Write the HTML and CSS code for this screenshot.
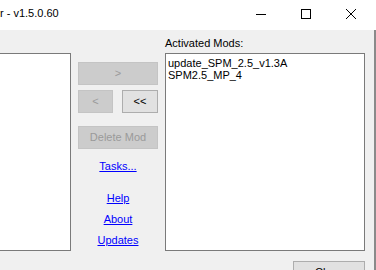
FILE: index.html
```html
<!DOCTYPE html>
<html>
<head>
<meta charset="utf-8">
<link rel="stylesheet" href="styles.css">
</head>
<body>
<div class="screen">
  <div class="window">
    <div class="titlebar">
      <span class="title">r - v1.5.0.60</span>
      <div class="controls">
        <span class="ctl"><svg width="10" height="10" viewBox="0 0 10 10"><line x1="0" y1="5.5" x2="10" y2="5.5" stroke="#000" stroke-width="1"/></svg></span>
        <span class="ctl"><svg width="10" height="10" viewBox="0 0 10 10"><rect x="0.5" y="0.5" width="9" height="9" fill="none" stroke="#000" stroke-width="1"/></svg></span>
        <span class="ctl"><svg width="10" height="10" viewBox="0 0 10 10"><path d="M0 0 L10 10 M10 0 L0 10" stroke="#000" stroke-width="1"/></svg></span>
      </div>
    </div>
    <div class="client">
      <div class="panes">
        <div class="listbox listbox-left"></div>
        <div class="mid">
          <button class="btn btn-disabled btn-wide">&gt;</button>
          <div class="btn-row">
            <button class="btn btn-disabled btn-left">&lt;</button>
            <button class="btn btn-right">&lt;&lt;</button>
          </div>
          <button class="btn btn-disabled btn-delete">Delete Mod</button>
          <a class="link link-tasks" href="#">Tasks...</a>
          <a class="link link-help" href="#">Help</a>
          <a class="link link-about" href="#">About</a>
          <a class="link link-about" href="#">Updates</a>
        </div>
        <div class="label">Activated Mods:</div>
        <div class="listbox listbox-right">
          <div class="item">update_SPM_2.5_v1.3A</div>
          <div class="item">SPM2.5_MP_4</div>
        </div>
      </div>
      <div class="footer">
        <button class="btn btn-close">Close</button>
      </div>
    </div>
  </div>
  <div class="edge"></div>
</div>
</body>
</html>
```
FILE: styles.css
```css
html, body {
  margin: 0;
  padding: 0;
}
body {
  background: #f0f0f0;
  font-family: "Liberation Sans", Arial, sans-serif;
  font-size: 11px;
  color: #000;
  overflow: hidden;
}
.screen {
  display: flex;
  width: 376px;
  height: 270px;
  overflow: hidden;
}
.window {
  width: 374px;
  display: flex;
  flex-direction: column;
  background: #f0f0f0;
}
.edge {
  width: 2px;
  background: linear-gradient(#ffffff 0 30px, #8a8a8a 30px);
}
.titlebar {
  height: 30px;
  flex: none;
  background: #ffffff;
  display: flex;
}
.title {
  flex: 1;
  padding-top: 7px;
  line-height: 13px;
  white-space: nowrap;
}
.controls {
  display: flex;
  margin-right: 1px;
}
.ctl {
  width: 45px;
  height: 30px;
  box-sizing: border-box;
  padding-top: 9px;
  display: flex;
  justify-content: center;
  align-items: flex-start;
}
.ctl svg {
  display: block;
}
.client {
  flex: 1;
  padding: 7px 9px 0 0;
}
.panes {
  display: grid;
  grid-template-columns: 71px 80px 200px;
  grid-template-rows: 16px 198px;
  column-gap: 7px;
}
.label {
  grid-row: 1;
  grid-column: 3;
  line-height: 13px;
  white-space: nowrap;
}
.listbox {
  grid-row: 2;
  box-sizing: border-box;
  background: #ffffff;
  border: 1px solid #7a7a7a;
}
.listbox-left {
  grid-column: 1;
  border-left: none;
}
.listbox-right {
  grid-column: 3;
  padding: 3px 0 0 2px;
}
.item {
  line-height: 12px;
  white-space: nowrap;
}
.mid {
  grid-row: 2;
  grid-column: 2;
  display: flex;
  flex-direction: column;
}
.btn {
  height: 23px;
  box-sizing: border-box;
  border: 1px solid #adadad;
  background: #e1e1e1;
  font: inherit;
  color: #000;
  padding: 0;
  line-height: 21px;
  text-align: center;
}
.btn-disabled {
  background: #cccccc;
  border-color: #c4c4c4;
  color: #9a9a9a;
}
.btn-wide {
  width: 80px;
  margin-top: 9px;
}
.btn-row {
  display: flex;
  justify-content: space-between;
  margin-top: 5px;
}
.btn-left {
  width: 35px;
}
.btn-right {
  width: 36px;
}
.btn-delete {
  width: 80px;
  margin-top: 13px;
}
.link {
  display: block;
  text-align: center;
  color: #0000ff;
  text-decoration: underline;
  line-height: 13px;
}
.link-tasks {
  margin-top: 11px;
}
.link-help {
  margin-top: 19px;
}
.link-about {
  margin-top: 8px;
}
.footer {
  display: flex;
  justify-content: flex-end;
  margin-top: 10px;
}
.btn-close {
  width: 72px;
}
```
